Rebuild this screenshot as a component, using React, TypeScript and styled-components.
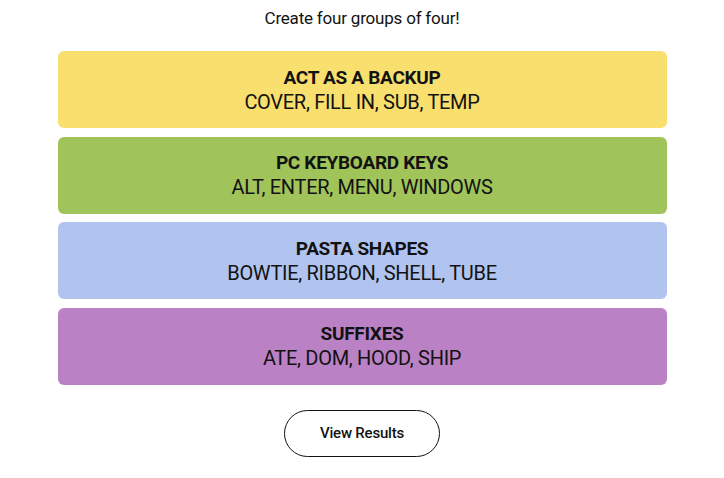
import React from "react";
import styled, { createGlobalStyle } from "styled-components";

const Global = createGlobalStyle`
  html, body { margin: 0; padding: 0; background: #fff; }
  body { font-family: Roboto, "Liberation Sans", sans-serif; color: #121212; }
`;

const Page = styled.div`
  width: 724px;
  display: flex;
  flex-direction: column;
  align-items: center;
  padding-top: 8px;
`;

const Prompt = styled.p`
  margin: 0 0 22px;
  font-size: 17px;
  line-height: 21px;
  font-weight: 400;
  letter-spacing: -0.2px;
`;

const Groups = styled.div`
  width: 609px;
  display: flex;
  flex-direction: column;
  gap: 8.67px;
`;

const Group = styled.div<{ $bg: string }>`
  background: ${(p) => p.$bg};
  border-radius: 6px;
  height: 77px;
  display: flex;
  flex-direction: column;
  align-items: center;
  justify-content: center;
`;

const Title = styled.div`
  font-size: 19px;
  font-weight: 700;
  line-height: 24px;
  letter-spacing: -0.3px;
`;

const Members = styled.div`
  font-size: 20px;
  font-weight: 400;
  line-height: 24px;
  letter-spacing: -0.3px;
`;

const ResultsButton = styled.button`
  margin-top: 25px;
  width: 156px;
  height: 47px;
  border: 1px solid #121212;
  border-radius: 24px;
  background: #fff;
  color: #121212;
  font-family: Roboto, "Liberation Sans", sans-serif;
  font-size: 15px;
  font-weight: 500;
  letter-spacing: -0.2px;
  cursor: pointer;
`;

const groups = [
  { title: "ACT AS A BACKUP", members: "COVER, FILL IN, SUB, TEMP", bg: "#F9DF6D" },
  { title: "PC KEYBOARD KEYS", members: "ALT, ENTER, MENU, WINDOWS", bg: "#A0C35A" },
  { title: "PASTA SHAPES", members: "BOWTIE, RIBBON, SHELL, TUBE", bg: "#B0C4EF" },
  { title: "SUFFIXES", members: "ATE, DOM, HOOD, SHIP", bg: "#BA81C5" },
];

export default function App() {
  return (
    <>
      <Global />
      <Page>
        <Prompt>Create four groups of four!</Prompt>
        <Groups>
          {groups.map((g) => (
            <Group key={g.title} $bg={g.bg}>
              <Title>{g.title}</Title>
              <Members>{g.members}</Members>
            </Group>
          ))}
        </Groups>
        <ResultsButton>View Results</ResultsButton>
      </Page>
    </>
  );
}
